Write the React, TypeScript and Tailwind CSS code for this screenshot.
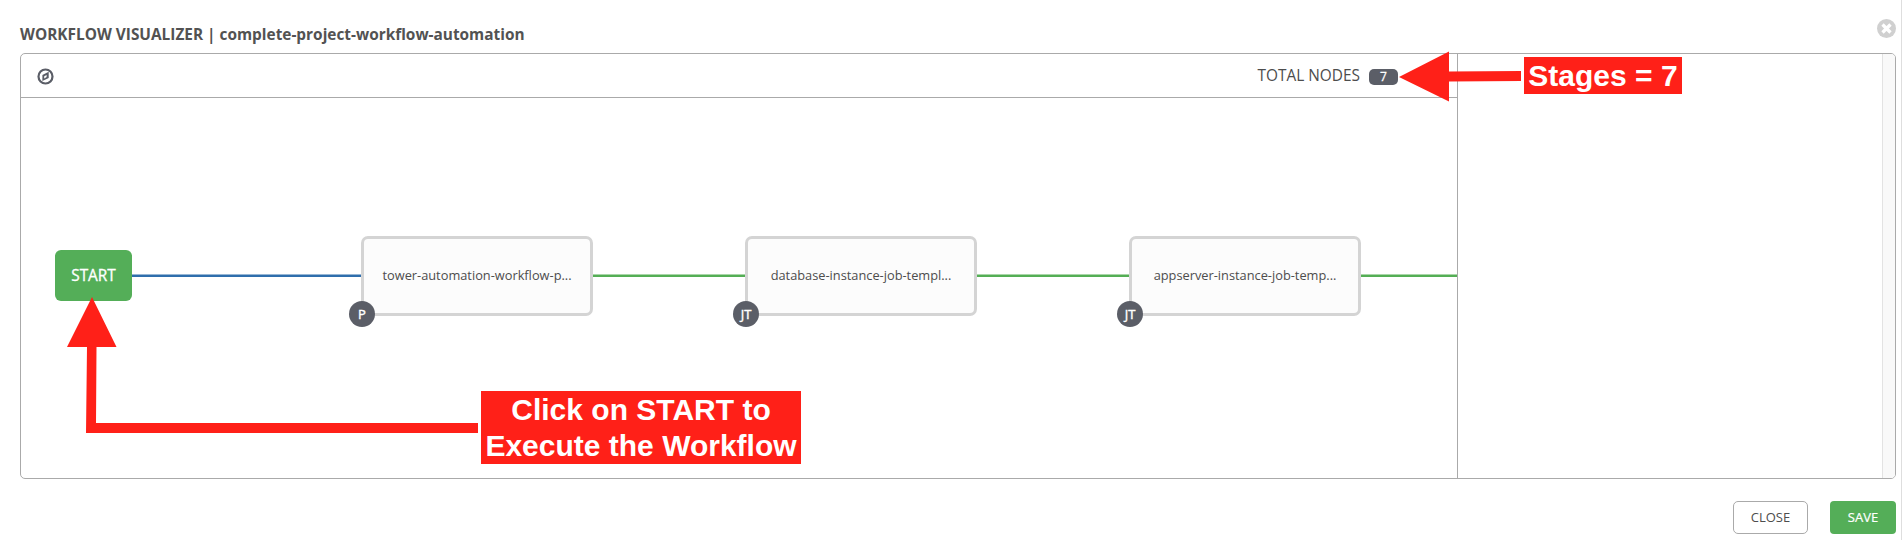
type WorkflowNode = { label: string; type: string; position: string };

const nodes: WorkflowNode[] = [
  { label: 'tower-automation-workflow-p...', type: 'P', position: 'left-[340px]' },
  { label: 'database-instance-job-templ...', type: 'JT', position: 'left-[724px]' },
  { label: 'appserver-instance-job-temp...', type: 'JT', position: 'left-[1108px]' },
];

function Node({ label, type, position }: WorkflowNode) {
  return (
    <div
      className={`absolute top-[138px] flex h-[80px] w-[232px] items-center justify-center rounded-[7px] border-[3px] border-[#d4d4d4] bg-[#fcfcfc] ${position}`}
    >
      <span className="-mt-[2px] whitespace-nowrap text-[12.8px] leading-none text-[#4d4d4d]">{label}</span>
      <span className="absolute -bottom-[14px] -left-[15px] flex size-[26px] items-center justify-center rounded-full bg-[#5b5e67] text-[13px] leading-none text-white [-webkit-text-stroke:0.4px_white]">
        {type}
      </span>
    </div>
  );
}

function Links() {
  return (
    <svg className="absolute left-0 top-0" width="1436" height="380" fill="none">
      <path d="M111 177.75H341" stroke="#2f6eac" strokeWidth="2.5" />
      <path d="M571 177.75H725M955 177.75H1109M1339 177.75H1436" stroke="#54ae55" strokeWidth="2.5" />
    </svg>
  );
}

function Compass() {
  return (
    <svg className="mt-px" width="17" height="17" viewBox="0 0 17 17" fill="none">
      <circle cx="8.5" cy="8.5" r="7" stroke="#5b5e67" strokeWidth="2.2" />
      <path d="M11.7 3.8V9.9L5.4 13V7.1Z" fill="#5b5e67" />
      <path d="M7.2 8.2L9.6 7V9.1L7.2 10.4Z" fill="#fff" />
    </svg>
  );
}

export default function App() {
  return (
    <div className="relative flex h-[540px] w-[1902px] flex-col overflow-hidden border-r border-[#dedede] bg-white pl-5 pr-[5px] font-['Open_Sans',sans-serif] text-[#4d4d4d]">
      <header className="flex h-[53px] items-start justify-between pt-[19px]">
        <h1 className="mt-1 text-[15.4px] font-bold leading-6 text-[#525252]">
          WORKFLOW VISUALIZER | complete-project-workflow-automation
        </h1>
        <button className="flex size-[19px] items-center justify-center rounded-full bg-[#d0d0d0]" aria-label="Close">
          <svg width="11" height="11" viewBox="0 0 11 11">
            <path d="M1.5 1.5L9.5 9.5M9.5 1.5L1.5 9.5" stroke="#fff" strokeWidth="3.3" />
          </svg>
        </button>
      </header>

      <main className="flex h-[426px] shrink-0 overflow-hidden rounded-[5px] border border-[#aaa]">
        <section className="flex w-[1437px] flex-col border-r border-[#aaa]">
          <div className="flex h-[44px] items-center justify-between border-b border-[#aaa] pl-4 pr-[59px]">
            <Compass />
            <div className="flex items-center gap-[9px]">
              <span className="text-[15.4px] leading-none">TOTAL NODES</span>
              <span className="mt-[2px] flex h-4 w-[29px] items-center justify-center rounded-[5px] bg-[#5b5e67] text-[12px] leading-none text-white [-webkit-text-stroke:0.3px_white]">
                7
              </span>
            </div>
          </div>
          <div className="relative flex-1 overflow-hidden">
            <Links />
            <div className="absolute left-[34px] top-[152px] flex h-[51px] w-[77px] items-center justify-center rounded-[6px] bg-[#54ae58] text-[15.4px] leading-none text-white [-webkit-text-stroke:0.3px_white]">
              START
            </div>
            {nodes.map((node) => (
              <Node key={node.label} {...node} />
            ))}
          </div>
        </section>
        <aside className="flex flex-1 justify-end">
          <div className="w-[13px] border-l border-[#e3e3e3] bg-[#f9f9f9]" />
        </aside>
      </main>

      <footer className="mt-[22px] flex justify-end gap-[22px] text-[13px] leading-none">
        <button className="flex h-[33px] w-[75px] items-center justify-center rounded-[5px] border border-[#aaa]">CLOSE</button>
        <button className="flex h-[33px] w-[66px] items-center justify-center rounded-[4px] bg-[#54ae58] text-white [-webkit-text-stroke:0.2px_white]">SAVE</button>
      </footer>

      <svg className="pointer-events-none absolute left-0 top-0" width="1902" height="540" fill="#ff2018">
        <path d="M92 297L116.5 347H96.5L96 423H478V433H86L87 347H67Z" />
        <path d="M1399 77L1449 51.5V71.5L1521 71V81L1449 81.5V101.5Z" />
      </svg>
      <div className="absolute left-[1524px] top-[57px] flex h-[37px] w-[158px] items-center justify-center whitespace-nowrap bg-[#ff2018] pt-px font-['Liberation_Sans',Arial,sans-serif] text-[30px] font-bold leading-none text-white">
        Stages = 7
      </div>
      <div className="absolute left-[481px] top-[391px] flex h-[73px] w-[320px] flex-col items-center justify-center whitespace-nowrap bg-[#ff2018] pt-px font-['Liberation_Sans',Arial,sans-serif] text-[30px] font-bold leading-[36px] text-white">
        <span>Click on START to</span>
        <span>Execute the Workflow</span>
      </div>
    </div>
  );
}
